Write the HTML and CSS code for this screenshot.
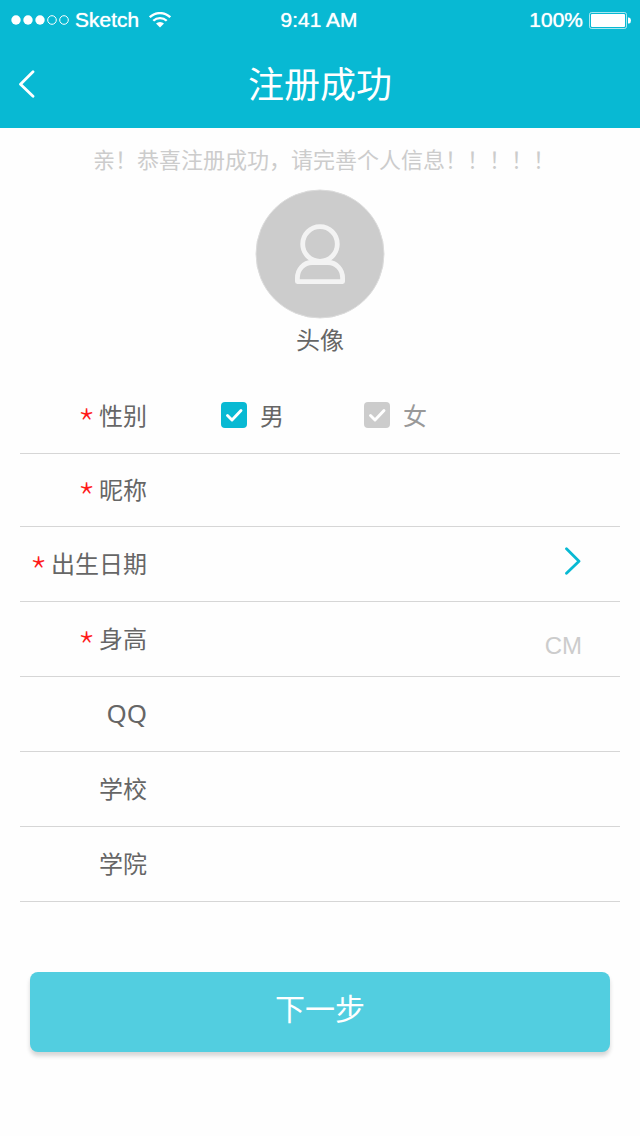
FILE: index.html
```html
<!DOCTYPE html>
<html lang="zh-CN">
<head>
<meta charset="utf-8">
<meta name="viewport" content="width=device-width, initial-scale=1">
<title>注册成功</title>
<link rel="stylesheet" href="styles.css">
</head>
<body>
<header class="top">
  <div class="status">
    <div class="status-left">
      <svg width="58" height="10" viewBox="0 0 58 10" aria-hidden="true">
        <g fill="#fff"><circle cx="5" cy="5" r="4.7"/><circle cx="17" cy="5" r="4.7"/><circle cx="29" cy="5" r="4.7"/></g>
        <g fill="none" stroke="#fff"><circle cx="41" cy="5" r="4.3"/><circle cx="53" cy="5" r="4.3"/></g>
      </svg>
      <span>Sketch</span>
      <svg class="wifi" width="22" height="16" viewBox="0 0 22 16" aria-hidden="true">
        <g fill="none" stroke="#fff" stroke-width="2.3"><path d="M.8 5.2A14.6 14.6 0 0 1 21.2 5.2"/><path d="M4.3 8.8A9.6 9.6 0 0 1 17.7 8.8"/></g>
        <path d="M7 11.6A5.8 5.8 0 0 1 15 11.6L11 15.6Z" fill="#fff"/>
      </svg>
    </div>
    <span class="time">9:41 AM</span>
    <div class="status-right">
      <span>100%</span>
      <svg width="42" height="17" viewBox="0 0 42 17" aria-hidden="true">
        <rect x=".5" y=".5" width="37" height="16" rx="2" fill="none" stroke="#fff" stroke-opacity=".65"/>
        <rect x="2" y="2" width="34" height="13" rx="1" fill="#fff"/>
        <path d="M39 5.5H40Q42 6 42 8.5T40 11.5H39Z" fill="#fff"/>
      </svg>
    </div>
  </div>
  <div class="nav">
    <button class="back" type="button" aria-label="返回">
      <svg width="18" height="28" viewBox="0 0 18 28" aria-hidden="true"><path d="M15 1.7L2.5 14.2L15 26.3" fill="none" stroke="#fff" stroke-width="2.8" stroke-linecap="round" stroke-linejoin="round"/></svg>
    </button>
    <h1 class="title">注册成功</h1>
  </div>
</header>
<main>
  <p class="welcome">亲！恭喜注册成功，请完善个人信息！！！！！</p>
  <button class="avatar" type="button">
    <svg class="avatar-pic" width="130" height="130" viewBox="0 0 130 130" aria-hidden="true">
      <circle cx="65" cy="65" r="64" fill="#ccc" stroke="#dcdcdc"/>
      <g fill="none" stroke="#f3f3f3" stroke-width="4.8" stroke-linejoin="round"><circle cx="65" cy="55" r="17.3"/><path d="M42.4 92.6V89C42.4 80.5 48.5 73.5 57 73.5H73C81.5 73.5 87.6 80.5 87.6 89V92.6Z"/></g>
    </svg>
    <span>头像</span>
  </button>
  <form class="form">
    <div class="row" role="group" aria-labelledby="gender">
      <span class="label" id="gender"><span class="star">*</span>性别</span>
      <div class="options">
        <label class="option"><input class="check" type="checkbox" name="male" checked><svg class="tick" width="26" height="26" viewBox="0 0 26 26" aria-hidden="true"><path d="M6.5 13.5L11 18L20 8.5" fill="none" stroke="#fff" stroke-width="2.9" stroke-linecap="round" stroke-linejoin="round"/></svg><span class="option-text">男</span></label>
        <label class="option"><input class="check" type="checkbox" name="female"><svg class="tick" width="26" height="26" viewBox="0 0 26 26" aria-hidden="true"><path d="M6.5 13.5L11 18L20 8.5" fill="none" stroke="#fff" stroke-width="2.9" stroke-linecap="round" stroke-linejoin="round"/></svg><span class="option-text">女</span></label>
      </div>
    </div>
    <div class="row row-short"><label class="label" for="nick"><span class="star">*</span>昵称</label><input class="field" id="nick" type="text"></div>
    <div class="row">
      <label class="label" for="birth"><span class="star">*</span>出生日期</label><input class="field" id="birth" type="text">
      <button class="pick" type="button" aria-label="选择日期"><svg width="18" height="28" viewBox="0 0 18 28" aria-hidden="true"><path d="M2.5 1.7L15 14.2L2.5 26.3" fill="none" stroke="#08b9d3" stroke-width="2.8" stroke-linecap="round" stroke-linejoin="round"/></svg></button>
    </div>
    <div class="row"><label class="label" for="height"><span class="star">*</span>身高</label><input class="field" id="height" type="text"><span class="unit">CM</span></div>
    <div class="row"><label class="label latin" for="qq">QQ</label><input class="field" id="qq" type="text"></div>
    <div class="row"><label class="label" for="school">学校</label><input class="field" id="school" type="text"></div>
    <div class="row"><label class="label" for="college">学院</label><input class="field" id="college" type="text"></div>
    <button class="next" type="submit">下一步</button>
  </form>
</main>
</body>
</html>
```
FILE: styles.css
```css
* { box-sizing: border-box; }
body {
  margin: 0;
  background: #fefefe;
  color: #666;
  font: 24px/36px "Noto Sans CJK SC", sans-serif;
}
button {
  padding: 0;
  border: 0;
  background: none;
  color: inherit;
  font: inherit;
  cursor: pointer;
}
svg { display: block; flex: none; }

.top { background: #08b9d3; color: #fff; }
.status {
  display: grid;
  grid-template-columns: 1fr auto 1fr;
  align-items: center;
  height: 40px;
  padding: 0 9px 0 11px;
  font: 21px/24px "Liberation Sans", Arial, sans-serif;
  text-shadow: 0 0 1px #fff;
}
.status-left, .status-right { display: flex; align-items: center; gap: 6px; }
.status-right { justify-content: flex-end; }
.time { padding-right: 4px; }
.wifi { margin-left: 4px; }
.nav {
  display: grid;
  grid-template-columns: 60px 1fr 60px;
  align-items: center;
  height: 88px;
}
.back { justify-self: start; padding: 8px 18px; }
.title { margin: 0; padding-bottom: 4px; font-size: 36px; line-height: 52px; font-weight: 400; text-align: center; }

.welcome {
  margin: 0;
  padding: 12px 0 13px 8px;
  color: #ccc;
  font-size: 22px;
  text-align: center;
  white-space: nowrap;
}
.avatar { display: grid; justify-items: center; gap: 2px; margin: 0 auto; }

.form { padding: 22px 20px 40px; }
.row {
  display: flex;
  align-items: center;
  min-height: 75px;
  padding: 0 38px 2px 0;
  border-bottom: 1px solid #d6d6d6;
}
.row-short { min-height: 73px; }
.label {
  display: flex;
  flex: none;
  align-items: center;
  justify-content: flex-end;
  gap: 3px;
  width: 127px;
}
.latin { font: 26px/36px "Noto Sans", sans-serif; }
.star { padding-top: 18px; color: #ff1a1a; font-size: 44px; font-weight: 100; line-height: 24px; }
.options { display: flex; gap: 80px; margin-left: 74px; }
.option { display: grid; grid-template-columns: 26px auto; column-gap: 13px; align-items: center; }
.check {
  grid-area: 1 / 1;
  width: 26px;
  height: 26px;
  margin: 0;
  border-radius: 4px;
  background: #ccc;
  appearance: none;
}
.check:checked { background: #08b9d3; }
.tick { grid-area: 1 / 1; pointer-events: none; }
.option-text { color: #999; }
.check:checked ~ .option-text { color: #666; }
.field {
  flex: 1;
  min-width: 0;
  height: 48px;
  margin-left: 20px;
  padding: 0;
  border: 0;
  outline: 0;
  background: transparent;
  color: inherit;
  font: inherit;
}
.pick { padding-bottom: 4px; }
.unit { padding-top: 16px; color: #ccc; font-family: "Liberation Sans", Arial, sans-serif; }
.next {
  display: block;
  width: calc(100% - 20px);
  height: 80px;
  margin: 70px 10px 0;
  padding-bottom: 10px;
  border-radius: 8px;
  background: #52cee0;
  box-shadow: 0 4px 4px rgba(0, 0, 0, .16);
  color: #fff;
  font-size: 30px;
}
```
